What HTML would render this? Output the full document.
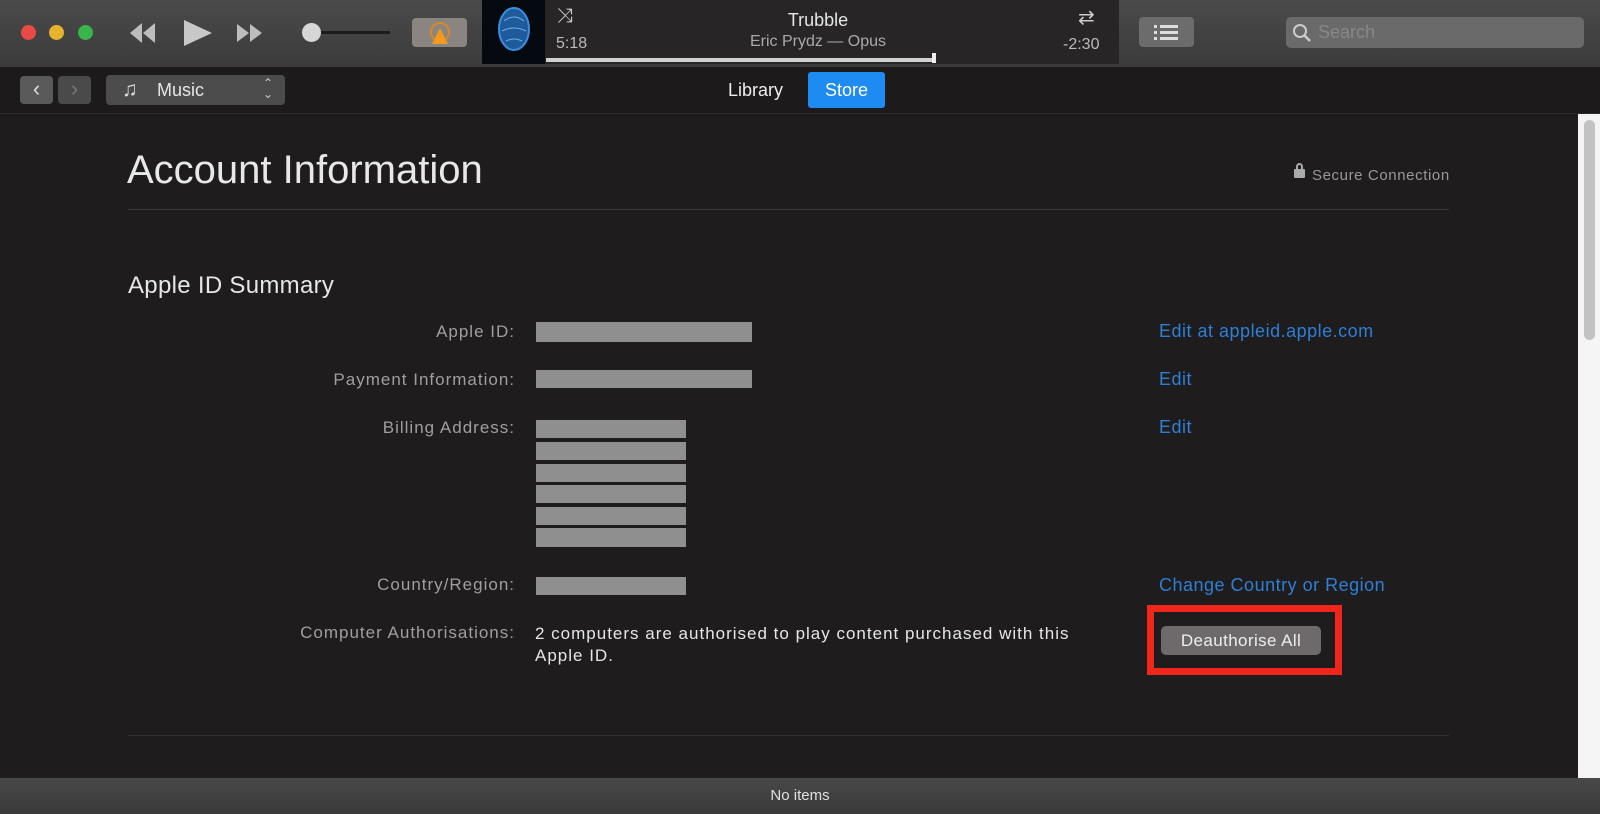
<!DOCTYPE html>
<html><head><meta charset="utf-8"><style>
*{margin:0;padding:0;box-sizing:border-box}
body{width:1600px;height:814px;background:#1e1c1d;font-family:"Liberation Sans",sans-serif;position:relative;overflow:hidden;color:#ddd}
.a{position:absolute}
.top{left:0;top:0;width:1600px;height:67px;background:linear-gradient(#4a4a4a,#3b3b3b)}
.nav{left:0;top:67px;width:1600px;height:47px;background:#1c1a1b;border-bottom:1px solid #2c2a2b}
.dot{width:15px;height:15px;border-radius:50%;top:25px}
.lbl{right:1085px;font-size:17px;color:#a09e9f;text-align:right;white-space:nowrap;letter-spacing:1px}
.bar{background:#8f8f8f;left:536px}
.link{left:1159px;font-size:18px;color:#2e7fd6;letter-spacing:0.5px}
</style></head><body>
<div class="a top"></div>
<div class="a dot" style="left:21px;background:#e84b45"></div>
<div class="a dot" style="left:49px;background:#e7b22c"></div>
<div class="a dot" style="left:78px;background:#39b54a"></div>
<svg class="a" style="left:124px;top:20px" width="160" height="26"><path d="M18 3 L6 13 L18 23Z M31 3 L19 13 L31 23Z" fill="#bdbdbd"/><path d="M60 2 L88 15 L60 28Z" fill="#c8c8c8" transform="translate(0,-2)"/><path d="M113 4 L125 13 L113 22Z M126 4 L138 13 L126 22Z" fill="#bdbdbd"/></svg>
<div class="a" style="left:310px;top:31px;width:80px;height:3px;background:#1c1c1c"></div>
<div class="a" style="left:302px;top:23px;width:19px;height:19px;border-radius:50%;background:#d6d6d6"></div>
<div class="a" style="left:412px;top:18px;width:55px;height:29px;border-radius:4px;background:#8a8580"></div>
<svg class="a" style="left:428px;top:20px" width="24" height="26"><circle cx="12" cy="12" r="9" fill="none" stroke="#d58a2a" stroke-width="2"/><path d="M12 8 L20 24 L4 24Z" fill="#f09a20"/></svg>
<div class="a" style="left:482px;top:0;width:63px;height:64px;background:#050a10"></div>
<svg class="a" style="left:492px;top:3px" width="44" height="56"><ellipse cx="22" cy="26" rx="15" ry="21" fill="#1f5a9a" stroke="#3b8fe0" stroke-width="2"/><path d="M12 18 Q22 10 32 18 M10 28 Q22 22 34 28 M14 38 Q22 34 30 38" stroke="#6ab0f0" fill="none"/></svg>
<div class="a" style="left:545px;top:0;width:574px;height:64px;background:#272526"></div>
<div class="a" style="left:557px;top:5px;font-size:20px;color:#ccc">⤨</div>
<div class="a" style="left:556px;top:35px;font-size:16px;color:#bbb">5:18</div>
<div class="a" style="left:531px;top:10px;width:574px;text-align:center;font-size:18px;color:#e6e6e6">Trubble</div>
<div class="a" style="left:531px;top:33px;width:574px;text-align:center;font-size:16px;color:#aaa">Eric Prydz — Opus</div>
<div class="a" style="left:1078px;top:5px;font-size:20px;color:#ccc">⇄</div>
<div class="a" style="left:1063px;top:36px;font-size:16px;color:#bbb">-2:30</div>
<div class="a" style="left:546px;top:58px;width:388px;height:4px;background:#d0d0d0"></div>
<div class="a" style="left:932px;top:53px;width:4px;height:10px;background:#eee"></div>
<div class="a" style="left:1139px;top:17px;width:55px;height:30px;border-radius:4px;background:#6c6c6c"></div>
<svg class="a" style="left:1154px;top:24px" width="26" height="16"><g fill="#ddd"><rect x="0" y="1" width="3" height="3"/><rect x="0" y="7" width="3" height="3"/><rect x="0" y="13" width="3" height="3"/><rect x="6" y="1" width="18" height="3"/><rect x="6" y="7" width="18" height="3"/><rect x="6" y="13" width="18" height="3"/></g></svg>
<div class="a" style="left:1286px;top:17px;width:298px;height:31px;border-radius:5px;background:#6a6a6a"></div>
<svg class="a" style="left:1292px;top:23px" width="20" height="20"><circle cx="8" cy="8" r="6" fill="none" stroke="#ccc" stroke-width="2"/><path d="M12 12 L18 18" stroke="#ccc" stroke-width="2.5"/></svg>
<div class="a" style="left:1318px;top:22px;font-size:18px;color:#888">Search</div>
<div class="a nav"></div>
<div class="a" style="left:20px;top:76px;width:33px;height:28px;border-radius:4px;background:#5a5a5a;color:#ddd;font-size:22px;text-align:center;line-height:26px">‹</div>
<div class="a" style="left:58px;top:76px;width:33px;height:28px;border-radius:4px;background:#4a4a4a;color:#777;font-size:22px;text-align:center;line-height:26px">›</div>
<div class="a" style="left:106px;top:75px;width:179px;height:30px;border-radius:4px;background:#4c4c4c"></div>
<div class="a" style="left:122px;top:78px;font-size:21px;color:#ddd">♫</div>
<div class="a" style="left:157px;top:80px;font-size:18px;color:#e6e6e6">Music</div>
<div class="a" style="left:263px;top:78px;font-size:12px;color:#ccc;line-height:11px">⌃<br>⌄</div>
<div class="a" style="left:728px;top:80px;font-size:18px;color:#eee">Library</div>
<div class="a" style="left:808px;top:72px;width:77px;height:36px;border-radius:3px;background:#1d8bf2;color:#fff;font-size:18px;text-align:center;line-height:36px">Store</div>
<div class="a" style="left:1578px;top:114px;width:22px;height:664px;background:#f5f5f5"></div>
<div class="a" style="left:1584px;top:120px;width:11px;height:220px;border-radius:6px;background:#c2c2c2"></div>
<div class="a" style="left:127px;top:148px;font-size:40px;color:#e8e8e8">Account Information</div>
<div class="a" style="left:1294px;top:169px;width:11px;height:9px;background:#aaa;border-radius:1px"></div>
<div class="a" style="left:1296px;top:163px;width:7px;height:8px;border:2px solid #aaa;border-bottom:0;border-radius:4px 4px 0 0"></div>
<div class="a" style="left:1312px;top:167px;font-size:15px;color:#999;letter-spacing:0.6px">Secure Connection</div>
<div class="a" style="left:128px;top:209px;width:1321px;height:1px;background:#3a3839"></div>
<div class="a" style="left:128px;top:272px;font-size:24px;color:#e6e6e6;letter-spacing:0.3px">Apple ID Summary</div>
<div class="a lbl" style="top:322px">Apple ID:</div>
<div class="a lbl" style="top:370px">Payment Information:</div>
<div class="a lbl" style="top:418px">Billing Address:</div>
<div class="a lbl" style="top:575px">Country/Region:</div>
<div class="a lbl" style="top:623px">Computer Authorisations:</div>
<div class="a bar" style="top:322px;width:216px;height:20px"></div>
<div class="a bar" style="top:370px;width:216px;height:18px"></div>
<div class="a bar" style="top:420px;width:150px;height:18px"></div>
<div class="a bar" style="top:442px;width:150px;height:18px"></div>
<div class="a bar" style="top:464px;width:150px;height:18px"></div>
<div class="a bar" style="top:485px;width:150px;height:18px"></div>
<div class="a bar" style="top:507px;width:150px;height:18px"></div>
<div class="a bar" style="top:528px;width:150px;height:19px"></div>
<div class="a bar" style="top:577px;width:150px;height:18px"></div>
<div class="a" style="left:535px;top:623px;font-size:17px;color:#e6e6e6;line-height:22px;letter-spacing:1px;white-space:nowrap">2 computers are authorised to play content purchased with this<br>Apple ID.</div>
<div class="a link" style="top:321px">Edit at appleid.apple.com</div>
<div class="a link" style="top:369px">Edit</div>
<div class="a link" style="top:417px">Edit</div>
<div class="a link" style="top:575px">Change Country or Region</div>
<div class="a" style="left:1147px;top:605px;width:195px;height:70px;border:7px solid #f0261d"></div>
<div class="a" style="left:1161px;top:626px;width:160px;height:29px;border-radius:5px;background:#6e6a6c;color:#eee;font-size:17px;text-align:center;line-height:29px;letter-spacing:0.4px">Deauthorise All</div>
<div class="a" style="left:128px;top:735px;width:1321px;height:1px;background:#333132"></div>
<div class="a" style="left:0;top:778px;width:1600px;height:36px;background:linear-gradient(#484848,#3a3a3a)"></div>
<div class="a" style="left:0;top:787px;width:1600px;text-align:center;font-size:15px;color:#e0e0e0">No items</div>
</body></html>
